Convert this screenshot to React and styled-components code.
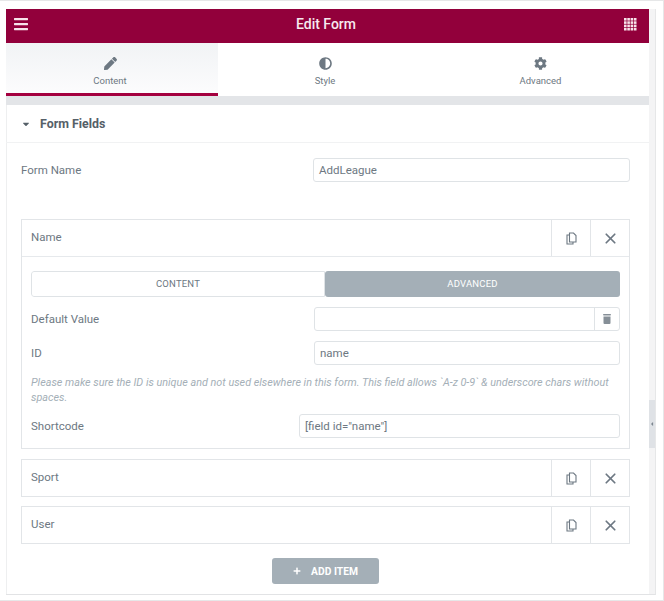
import React from "react";
import styled, { createGlobalStyle } from "styled-components";
import { FaBars, FaPen, FaAdjust, FaCog, FaPlus, FaCaretDown, FaCaretLeft } from "react-icons/fa";
import { X } from "lucide-react";

const GlobalStyle = createGlobalStyle`
  html, body { margin: 0; padding: 0; background: #fff; }
  body { font-family: Roboto, "Liberation Sans", sans-serif; }
  * { box-sizing: border-box; }
`;

const Page = styled.div`
  width: 664px;
  height: 601px;
  overflow: hidden;
  border: 1px solid #e6e7e8;
  border-left: none;
  padding: 8px 0 0 6px;
  display: flex;
  align-items: flex-start;
`;

const Panel = styled.div`
  width: 643px;
  height: 586px;
  display: flex;
  flex-direction: column;
  background: #fff;
  border-bottom: 1px solid #e2e3e5;
  box-shadow: inset 1px 0 0 #eeeff0;
`;

const Rail = styled.div`
  position: relative;
  width: 7px;
  height: 586px;
  background: #f4f4f5;
  border-bottom: 1px solid #e2e3e5;
  border-right: 1px solid #e6e7e8;
`;

const RailThumb = styled.div`
  position: absolute;
  top: 391px;
  left: 0;
  width: 6px;
  height: 48px;
  display: flex;
  align-items: center;
  justify-content: flex-end;
  background: #dfe2e6;
  color: #7d8790;
  font-size: 6px;
`;

const Header = styled.header`
  height: 34px;
  flex: none;
  display: flex;
  align-items: center;
  justify-content: space-between;
  padding: 0 10px 4px 7px;
  background: #92003b;
  color: #fff;
`;

const HeaderTitle = styled.h1`
  margin: 0;
  font-size: 14px;
  font-weight: 500;
  color: #f7e9ef;
`;

const HeaderIcon = styled.span`
  width: 16px;
  display: flex;
  justify-content: center;
  color: #f7e3ea;
  font-size: 16px;
`;

const Tabs = styled.nav`
  height: 53px;
  flex: none;
  display: grid;
  grid-template-columns: 212px 214px 1fr;
`;

const Tab = styled.div`
  display: flex;
  flex-direction: column;
  align-items: center;
  padding: 13px ${(p) => (p.$active ? 4 : 0)}px 0 0;
  gap: 5px;
  color: #6d7882;
  font-size: 9.5px;
  background: ${(p) => (p.$active ? "linear-gradient(180deg, #f1f3f5, #fcfcfd)" : "#fff")};
  border-bottom: 3px solid ${(p) => (p.$active ? "#a4003f" : "transparent")};
`;

const TabIcon = styled.span`
  display: flex;
  font-size: 13px;
  height: 14px;
  align-items: center;
`;

const Strip = styled.div`
  height: 9px;
  flex: none;
  background: #e3e5e8;
`;

const SectionHead = styled.div`
  height: 38px;
  flex: none;
  display: flex;
  align-items: center;
  gap: 9px;
  padding-left: 15px;
  border-bottom: 1px solid #f1f2f3;
  color: #556068;
  font-size: 12.4px;
  font-weight: 700;
  svg { font-size: 10px; }
`;

const Body = styled.div`
  flex: 1;
  display: flex;
  flex-direction: column;
  padding: 15px 19px 0 15px;
`;

const Label = styled.label`
  color: #6d7882;
  font-size: 11.5px;
`;

const Row = styled.div`
  display: flex;
  align-items: center;
  justify-content: space-between;
`;

const Input = styled.div`
  width: ${(p) => p.$width}px;
  height: 24px;
  padding-left: 5px;
  display: flex;
  align-items: center;
  border: 1px solid #dfe3e6;
  border-radius: 3px;
  background: #fff;
  color: #6d7882;
  font-size: 11.5px;
`;

const Repeater = styled.section`
  border: 1px solid #e2e5e8;
  margin-top: ${(p) => p.$top}px;
`;

const ItemHead = styled.div`
  height: 36px;
  display: flex;
  align-items: stretch;
`;

const ItemTitle = styled.div`
  flex: 1;
  display: flex;
  align-items: center;
  padding: 0 0 2px 9px;
  color: #6d7882;
  font-size: 11.5px;
`;

const ItemButton = styled.div`
  width: 39px;
  display: flex;
  align-items: center;
  justify-content: center;
  border-left: 1px solid #e2e5e8;
  color: #6d7882;
`;

const ItemBody = styled.div`
  border-top: 1px solid #e6e9ec;
  padding: 14px 9px 10px;
  display: flex;
  flex-direction: column;
`;

const Switch = styled.div`
  height: 26px;
  display: grid;
  grid-template-columns: 294px 1fr;
  border-radius: 3px;
  overflow: hidden;
`;

const SwitchButton = styled.div`
  display: flex;
  align-items: center;
  justify-content: center;
  padding-bottom: 2px;
  font-size: 9.5px;
  letter-spacing: 0.2px;
  color: ${(p) => (p.$active ? "#fff" : "#6d7882")};
  background: ${(p) => (p.$active ? "#a4afb7" : "#fff")};
  border: ${(p) => (p.$active ? "none" : "1px solid #dfe3e6")};
  border-radius: 3px 0 0 3px;
`;

const ControlRow = styled(Row)`
  margin-top: ${(p) => p.$top}px;
`;

const TrashInput = styled.div`
  width: 306px;
  height: 24px;
  display: flex;
  justify-content: flex-end;
  border: 1px solid #dfe3e6;
  border-radius: 3px;
`;

const TrashButton = styled.div`
  width: 25px;
  display: flex;
  align-items: center;
  justify-content: center;
  border-left: 1px solid #dfe3e6;
  color: #868f97;
`;

const Note = styled.p`
  margin: 11px 0 0;
  color: #a4afb7;
  font-size: 10.8px;
  font-style: italic;
  line-height: 14.5px;
`;

const AddRow = styled.div`
  display: flex;
  justify-content: center;
  margin-top: 14px;
`;

const AddButton = styled.div`
  width: 107px;
  height: 26px;
  display: flex;
  align-items: center;
  justify-content: center;
  gap: 10px;
  background: #a4afb7;
  border-radius: 3px;
  color: #fff;
  font-size: 10.3px;
  font-weight: 700;
  svg { font-size: 8px; }
`;

const GridIcon = () => (
  <svg width="13" height="13" viewBox="0 0 13 13" fill="currentColor">
    {[0, 3.3, 6.6, 9.9].map((y) =>
      [0, 3.3, 6.6, 9.9].map((x) => <rect key={`${x}-${y}`} x={x} y={y} width="2.6" height="2.6" />)
    )}
  </svg>
);

const CopyIcon = () => (
  <svg width="11" height="13" viewBox="0 0 11 13" fill="none" stroke="currentColor" strokeWidth="1.1">
    <path d="M3.5 3H1v9h6v-2" />
    <path d="M3.5 1h4L10 3.5V10H3.5z" />
  </svg>
);

const TrashIcon = () => (
  <svg width="8" height="10" viewBox="0 0 8 10" fill="currentColor">
    <rect x="0" y="0" width="8" height="1.6" rx="0.8" />
    <path d="M0.5 2.4h7V9a1 1 0 0 1-1 1h-5a1 1 0 0 1-1-1z" />
  </svg>
);

const ItemActions = () => (
  <>
    <ItemButton><CopyIcon /></ItemButton>
    <ItemButton><X size={17} strokeWidth={2.4} /></ItemButton>
  </>
);

const App = () => {
  // RENDER
  return (
    <>
      <GlobalStyle />
      <Page>
        <Panel>
          <Header>
            <HeaderIcon><FaBars /></HeaderIcon>
            <HeaderTitle>Edit Form</HeaderTitle>
            <HeaderIcon><GridIcon /></HeaderIcon>
          </Header>
          <Tabs>
            <Tab $active><TabIcon><FaPen /></TabIcon>Content</Tab>
            <Tab><TabIcon><FaAdjust /></TabIcon>Style</Tab>
            <Tab><TabIcon><FaCog /></TabIcon>Advanced</Tab>
          </Tabs>
          <Strip />
          <SectionHead><FaCaretDown />Form Fields</SectionHead>
          <Body>
            <Row>
              <Label>Form Name</Label>
              <Input $width={317}>AddLeague</Input>
            </Row>
            <Repeater $top={37}>
              <ItemHead><ItemTitle>Name</ItemTitle><ItemActions /></ItemHead>
              <ItemBody>
                <Switch>
                  <SwitchButton>CONTENT</SwitchButton>
                  <SwitchButton $active>ADVANCED</SwitchButton>
                </Switch>
                <ControlRow $top={10}>
                  <Label>Default Value</Label>
                  <TrashInput><TrashButton><TrashIcon /></TrashButton></TrashInput>
                </ControlRow>
                <ControlRow $top={10}>
                  <Label>ID</Label>
                  <Input $width={306}>name</Input>
                </ControlRow>
                <Note>Please make sure the ID is unique and not used elsewhere in this form. This field allows `A-z 0-9` &amp; underscore chars without spaces.</Note>
                <ControlRow $top={9}>
                  <Label>Shortcode</Label>
                  <Input $width={321}>[field id="name"]</Input>
                </ControlRow>
              </ItemBody>
            </Repeater>
            <Repeater $top={10}>
              <ItemHead><ItemTitle>Sport</ItemTitle><ItemActions /></ItemHead>
            </Repeater>
            <Repeater $top={9}>
              <ItemHead><ItemTitle>User</ItemTitle><ItemActions /></ItemHead>
            </Repeater>
            <AddRow>
              <AddButton><FaPlus />ADD ITEM</AddButton>
            </AddRow>
          </Body>
        </Panel>
        <Rail><RailThumb><FaCaretLeft /></RailThumb></Rail>
      </Page>
    </>
  );
};

export default App;
